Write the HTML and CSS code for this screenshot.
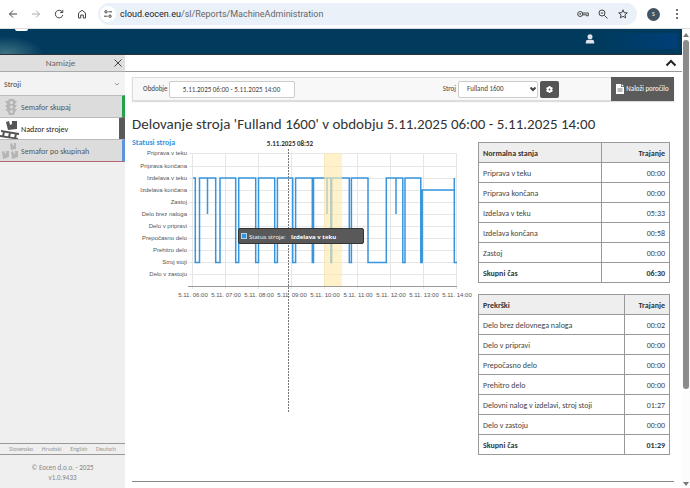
FILE: index.html
```html
<!DOCTYPE html>
<html lang="sl">
<head>
<meta charset="utf-8">
<title>Delovanje stroja</title>
<link rel="stylesheet" href="styles.css">
</head>
<body>
<div class="browser">
  <button class="nav" aria-label="Nazaj"><svg viewBox="0 0 12 12"><path d="M10 6H2.5M6 2.5 2.5 6 6 9.500"/></svg></button>
  <button class="nav dim" aria-label="Naprej"><svg viewBox="0 0 12 12"><path d="M2 6h7.500M6 2.500 9.500 6 6 9.500"/></svg></button>
  <button class="nav" aria-label="Osveži"><svg viewBox="0 0 12 12"><path d="M9.300 4A3.800 3.800 0 1 0 9.800 7M9.800 2v2.500H7.200"/></svg></button>
  <button class="nav" aria-label="Domov"><svg viewBox="0 0 12 12"><path d="M2.500 5 6 2.300 9.500 5v5H7.300V7H4.700v3H2.500z"/></svg></button>
  <div class="address">
    <span class="site"><svg viewBox="0 0 12 12"><circle cx="4" cy="3.800" r="1.200"/><path d="M6.500 3.800H10M2 8.200h3.500"/><circle cx="8" cy="8.200" r="1.200"/></svg></span>
    <span class="url"><b>cloud.eocen.eu</b>/sl/Reports/MachineAdministration</span>
    <svg class="key" viewBox="0 0 12 12"><circle cx="3.200" cy="6" r="2.500"/><circle cx="3.200" cy="6" r=".5"/><path d="M5.500 5h5.800v2.800H9.500V6.800H5.500"/></svg>
    <svg viewBox="0 0 12 12"><circle cx="5" cy="5" r="3"/><path d="M7.300 7.300 10.500 10.500M3.700 5h2.600"/></svg>
    <svg viewBox="0 0 12 12"><path d="M6 1.800 7.200 4.700l3.100.2-2.400 2 .8 3L6 8.300 3.300 9.900l.8-3-2.400-2 3.100-.2z"/></svg>
  </div>
  <span class="avatar">S</span>
  <svg class="dots" viewBox="0 0 4 12"><circle cx="2" cy="2" r="1"/><circle cx="2" cy="6" r="1"/><circle cx="2" cy="10" r="1"/></svg>
</div>
<div class="viewport">
  <div class="page">
    <header class="top">
      <span class="logo"></span>
      <svg class="user" viewBox="0 0 10 10"><circle cx="5" cy="2.700" r="2.500"/><path d="M.8 9.500V8Q.8 5.800 3 5.800h4Q9.200 5.800 9.200 8v1.500z"/></svg>
      <span class="account"></span>
    </header>
    <div class="columns">
      <aside class="side">
        <div class="side-head"><span>Namizje</span><button aria-label="Zapri"><svg viewBox="0 0 10 10"><path d="M1.500 1.500l7 7M8.500 1.500l-7 7"/></svg></button></div>
        <button class="group"><span>Stroji</span><svg viewBox="0 0 6 6"><path d="M1 2.200 3 4 5 2.200"/></svg></button>
        <nav>
          <a class="item green" href="#"><svg viewBox="0 0 20 20"><path d="M9 2h5l1 2h2l-2 3v1h2l-2 3v1h2l-2 3-1 3H9l-1-3-3-3h2v-1L5 8h2V7L5 4h3z"/><g class="hole"><circle cx="11.500" cy="5.500" r="1.500"/><circle cx="11.500" cy="10" r="1.500"/><circle cx="11.500" cy="14.500" r="1.500"/></g></svg><span>Semafor skupaj</span></a>
          <a class="item active" href="#"><svg viewBox="0 0 20 20"><path d="m6 3 3-1 1 4 2-1V2h5v8l-9 1zM1 11l18 3v2L1 13zM0 16l18 3v1h-4L0 18zM3 12l2 .5L4 18l-2-.5zM9 13l2 .5-1 5.500-2-.5zM15 14l2 .5-1 5.500-2-.5z"/></svg><span>Nadzor strojev</span></a>
          <a class="item blue" href="#"><svg viewBox="0 0 20 20"><path d="m10 3 2-1 1 3 1-1V2h2v6l-5 1zM2 11l2-1 1 3 1-1v-2h3v6l-6 2zM11 11l2-1 1 3 1-1v-2h3v6l-6 2z"/></svg><span>Semafor po skupinah</span></a>
        </nav>
        <div class="langs"><a href="#">Slovensko</a><a href="#">Hrvatski</a><a href="#">English</a><a href="#">Deutsch</a></div>
        <footer>© Eocen d.o.o. - 2025<br>v1.0.9433</footer>
      </aside>
      <main>
        <div class="collapse"><button aria-label="Skrij"><svg viewBox="0 0 12 8"><path d="M1.500 6.500 6 2l4.500 4.500"/></svg></button></div>
        <div class="content">
          <form class="toolbar">
            <label for="period">Obdobje</label>
            <input id="period" value="5.11.2025 06:00 - 5.11.2025 14:00">
            <label for="machine" class="push">Stroj</label>
            <span class="pick"><select id="machine"><option>Fulland 1600</option></select><svg viewBox="0 0 8 8"><path d="M1.500 2.500 4 5l2.500-2.500"/></svg></span>
            <button type="button" class="gear" aria-label="Nastavitve"><svg viewBox="0 0 10 10"><path d="M5 1.200v7.600M1.700 3.100l6.600 3.800M1.700 6.900l6.600-3.800"/><circle cx="5" cy="5" r="2"/></svg></button>
            <button type="button" class="load"><svg viewBox="0 0 8 10"><path d="M0 0h5v3h3v7H0zM5.700 0 8 2.300H5.700z"/><path class="rule" d="M1.500 5h5M1.500 7h5"/></svg>Naloži poročilo</button>
          </form>
          <h1>Delovanje stroja 'Fulland 1600' v obdobju 5.11.2025 06:00 - 5.11.2025 14:00</h1>
          <div class="report">
            <svg class="chart" viewBox="132 137 346 278">
              <g class="grid"><path d="M189 153.500H457M189 166.500H457M189 178.500H457M189 190.500H457M189 202.500H457M189 214.500H457M189 226.500H457M189 238.500H457M189 250.500H457M189 262.500H457M189 274.500H457"/><path d="M192.500 153V289M225.500 153V289M258.500 153V289M291.500 153V289M324.500 153V289M357.500 153V289M390.500 153V289M423.500 153V289M456.500 153V289"/></g>
              <path class="axis" d="M188 286.500H457"/>
              <path class="series" d="M193 178H195.300V262.500H199.500V178H207.500V214V178H215.700V262.500H220V178H235.700V262.500H238.700V178H255.700V262.500H258.500V178H274.700V262.500H277.400V178H292.700V262.500H295.600V178H312.300V262.500H313.500V178H327V214V178H330.800V262.500H331.700V178H349.300V262.500H351.400V178H368V262.500H386.300V178H396V214V178H402.800V262.500H405V178H420.800V262.500H422.200V190H454.300V178V262.500H457"/>
              <rect class="band" x="324" y="153" width="18" height="133"/>
              <path class="cursor" d="M288.500 149V413"/>
              <text class="title" x="132" y="145">Statusi stroja</text>
              <text class="when" x="290" y="146">5.11.2025 08:52</text>
              <g class="ylab"><text x="187" y="155">Priprava v teku</text><text x="187" y="168">Priprava končana</text><text x="187" y="180">Izdelava v teku</text><text x="187" y="192">Izdelava končana</text><text x="187" y="204">Zastoj</text><text x="187" y="216">Delo brez naloga</text><text x="187" y="228">Delo v pripravi</text><text x="187" y="240">Prepočasno delo</text><text x="187" y="252">Prehitro delo</text><text x="187" y="264">Stroj stoji</text><text x="187" y="276">Delo v zastoju</text></g>
              <g class="xlab"><text x="193" y="297">5.11. 06:00</text><text x="226" y="297">5.11. 07:00</text><text x="259" y="297">5.11. 08:00</text><text x="292" y="297">5.11. 09:00</text><text x="325" y="297">5.11. 10:00</text><text x="358" y="297">5.11. 11:00</text><text x="391" y="297">5.11. 12:00</text><text x="424" y="297">5.11. 13:00</text><text x="457" y="297">5.11. 14:00</text></g>
              <g class="tip"><rect class="box" x="238.500" y="228.500" width="125" height="15" rx="1.500"/><rect class="swatch" x="241.500" y="233.500" width="5" height="5"/><text x="249" y="239">Status stroja:</text><text class="strong" x="291" y="239">Izdelava v teku</text></g>
            </svg>
            <div class="tables">
              <table>
                <thead><tr><th>Normalna stanja</th><th class="wide">Trajanje</th></tr></thead>
                <tbody>
                  <tr><td>Priprava v teku</td><td>00:00</td></tr>
                  <tr><td>Priprava končana</td><td>00:00</td></tr>
                  <tr><td>Izdelava v teku</td><td>05:33</td></tr>
                  <tr><td>Izdelava končana</td><td>00:58</td></tr>
                  <tr><td>Zastoj</td><td>00:00</td></tr>
                  <tr class="total"><td>Skupni čas</td><td>06:30</td></tr>
                </tbody>
              </table>
              <table>
                <thead><tr><th>Prekrški</th><th class="narrow">Trajanje</th></tr></thead>
                <tbody>
                  <tr><td>Delo brez delovnega naloga</td><td>00:02</td></tr>
                  <tr><td>Delo v pripravi</td><td>00:00</td></tr>
                  <tr><td>Prepočasno delo</td><td>00:00</td></tr>
                  <tr><td>Prehitro delo</td><td>00:00</td></tr>
                  <tr><td>Delovni nalog v izdelavi, stroj stoji</td><td>01:27</td></tr>
                  <tr><td>Delo v zastoju</td><td>00:00</td></tr>
                  <tr class="total"><td>Skupni čas</td><td>01:29</td></tr>
                </tbody>
              </table>
            </div>
          </div>
        </div>
      </main>
    </div>
  </div>
  <div class="scroll"><i class="up"></i><i class="thumb"></i><i class="down"></i></div>
</div>
</body>
</html>
```
FILE: styles.css
```css
* { box-sizing: border-box; }
body {
  margin: 0;
  height: 100vh;
  display: flex;
  flex-direction: column;
  overflow: hidden;
  background: #fff;
  color: #444;
  font: 8px/10px Carlito, Lato, "Open Sans", sans-serif;
}
button, input, select { font: inherit; color: inherit; }
button { border: 0; padding: 0; background: none; display: flex; align-items: center; }
a { color: inherit; text-decoration: none; }
svg { fill: none; stroke: currentColor; flex: none; }

.browser { height: 28px; display: flex; align-items: center; padding: 0 7px; flex: none; }
.nav { width: 12px; margin-right: 11px; color: #444; }
.nav svg { width: 12px; height: 12px; }
.dim { color: #aaa; }
.address {
  flex: 1;
  height: 22px;
  margin: 0 10px 0 -1px;
  padding: 0 8px 0 2px;
  display: flex;
  align-items: center;
  gap: 8px;
  border-radius: 11px;
  background: #ebf1f9;
}
.address svg { width: 12px; height: 12px; }
.site { width: 16px; height: 16px; padding: 2px; border-radius: 8px; background: #fff; }
.site svg { display: block; }
.address .site { margin-right: -4px; }
.url { flex: 1; font: 9px/12px Roboto, sans-serif; color: #666; }
.url b { font-weight: 400; color: #222; }
.avatar {
  width: 13px;
  height: 13px;
  margin-right: 15px;
  border-radius: 7px;
  background: #42545f;
  color: #fff;
  font-size: 6px;
  line-height: 13px;
  text-align: center;
}
.dots { width: 4px; height: 12px; margin-right: 4px; fill: #444; stroke: none; }

.viewport { flex: 1; display: flex; min-height: 0; border-top: 1px solid #ddd; }
.page { flex: 1; min-width: 0; display: flex; flex-direction: column; }
.top {
  height: 26px;
  flex: none;
  display: flex;
  align-items: flex-start;
  border-bottom: 1px solid #2a3238;
  background: radial-gradient(ellipse 38px 18px at 6px 100%, #3f7384, #003a5d);
}
.logo { width: 13px; height: 2px; margin-left: 15px; background: #fff; border-radius: 0 0 2px 2px; }
.user { width: 10px; height: 10px; margin: 5px 5px 0 auto; fill: #dde3e8; stroke: none; }
.account { width: 77px; height: 16px; margin: 4px 5px 0 0; background: linear-gradient(90deg, #003a5d, #003f78); }

.columns { flex: 1; display: flex; min-height: 0; }
.side { width: 125px; display: flex; flex-direction: column; background: #efefef; flex: none; }
.side-head {
  height: 17px;
  display: flex;
  align-items: center;
  padding: 0 2px 0 8px;
  border-bottom: 1px solid #aaa;
  background: #dfdfdf;
  color: #666;
  font-size: 9px;
}
.side-head span { flex: 1; text-align: center; }
.side-head svg { width: 10px; height: 10px; color: #444; }
.group { height: 23px; padding: 0 5px 0 4px; justify-content: space-between; background: #f3f3f3; }
.group svg { width: 6px; height: 6px; color: #999; }
.item {
  height: 22px;
  display: flex;
  align-items: center;
  gap: 1px;
  border-right: 3px solid #22a34a;
  border-top: 1px solid #bbb;
  background: #dcdcdc;
  background-clip: padding-box;
  color: #555;
}
.item svg { width: 20px; height: 20px; fill: #b5b5b5; stroke: none; }
.item .hole { fill: #dcdcdc; }
.item.active { background: #fff; color: #222; border-right: 6px solid #595959; }
.item.active svg { fill: #555; }
.item.blue { height: 23px; border-right-color: #5b93dc; border-bottom: 1px solid #b5656c; }
.langs {
  margin-top: auto;
  height: 12px;
  padding: 0 9px;
  display: flex;
  justify-content: space-between;
  align-items: center;
  border-top: 1px solid #999;
  border-bottom: 1px solid #999;
  color: #999;
  font-size: 6px;
  line-height: 8px;
}
footer { height: 33px; padding-top: 8px; text-align: center; color: #888; font-size: 7px; }

main { flex: 1; min-width: 0; }
.collapse {
  height: 17px;
  display: flex;
  align-items: center;
  justify-content: flex-end;
  padding-right: 5px;
  border-bottom: 1px solid #999;
}
.collapse svg { width: 12px; height: 8px; stroke-width: 2; color: #222; }
.content { margin: 5px 8px 0 7px; border-bottom: 1px solid #888; padding-bottom: 26px; }
.toolbar {
  height: 24px;
  display: flex;
  align-items: center;
  border: 1px solid #ddd;
  background: #f8f8f8;
  box-shadow: 0 1px 1px #ddd;
  padding-left: 10px;
  font-size: 7px;
}
#period, #machine { height: 17px; border: 1px solid #ccc; border-radius: 2px; background: #fff; }
#period { width: 126px; margin-left: 1px; text-align: center; padding: 0; }
.push { margin-left: auto; }
.pick { display: grid; margin: 0 2px; }
.pick > * { grid-area: 1 / 1; }
.pick svg { width: 8px; height: 8px; place-self: center end; margin-right: 1px; stroke-width: 2; pointer-events: none; }
#machine { appearance: none; width: 80px; padding: 0 8px; }
.gear { width: 19px; height: 17px; justify-content: center; border-radius: 2px; background: #555; color: #fff; }
.gear svg { width: 9px; height: 9px; stroke-width: 2; }
.gear circle { fill: #555; }
.load { align-self: stretch; width: 63px; margin: -1px -1px -1px 52px; justify-content: center; gap: 2px; background: #5b5b5b; color: #fff; }
.load svg { width: 8px; height: 10px; fill: #fff; stroke: none; }
.load .rule { stroke: #777; }
h1 { margin: 14px 0 9px; font-size: 15px; line-height: 18px; font-weight: 400; white-space: nowrap; color: #333; }

.report { display: flex; align-items: flex-start; }
.chart { flex: 1; min-width: 0; stroke: none; overflow: visible; margin-top: -5px; }
.grid { stroke: #e6e6e6; }
.axis { stroke: #999; }
.series { stroke: #3795dd; stroke-width: 1.5; }
.band { fill: #ffebad; fill-opacity: .65; }
.cursor { stroke: #777; stroke-dasharray: 2 1; }
.title { font-size: 8px; font-weight: 700; fill: #3795dd; }
.when { font-size: 7px; font-weight: 700; fill: #333; text-anchor: middle; }
.ylab, .xlab { font: 6px "Liberation Sans", sans-serif; fill: #555; }
.ylab { text-anchor: end; }
.xlab { text-anchor: middle; }
.tip { font: 6px "Open Sans", sans-serif; fill: #fff; }
.tip .box { fill: #595959; stroke: #333; }
.tip .swatch { fill: #3795dd; stroke: #a8d3f3; }
.tip .strong { font-weight: 700; }

.tables { width: 192px; margin-right: 4px; display: grid; gap: 11px; flex: none; }
table { width: 100%; border-collapse: collapse; }
th, td { height: 20px; padding: 0 4px; border: 1px solid #999; text-align: left; font-weight: 400; }
th { background: #eee; font-weight: 700; color: #333; }
th:last-child, td:last-child { text-align: right; }
.wide { width: 68px; }
.narrow { width: 45px; }
.total td { font-weight: 700; color: #333; }

.scroll { width: 8px; display: flex; flex-direction: column; align-items: center; background: #fcfcfc; flex: none; }
.up, .down { border: 3px solid transparent; }
.up { border-bottom: 4px solid #777; border-top: 0; margin-top: 4px; }
.thumb { width: 6px; height: 76%; margin-top: 3px; border-radius: 3px; background: #8b8b8b; }
.down { border-top: 4px solid #777; border-bottom: 0; margin: auto 0 2px; }
```
